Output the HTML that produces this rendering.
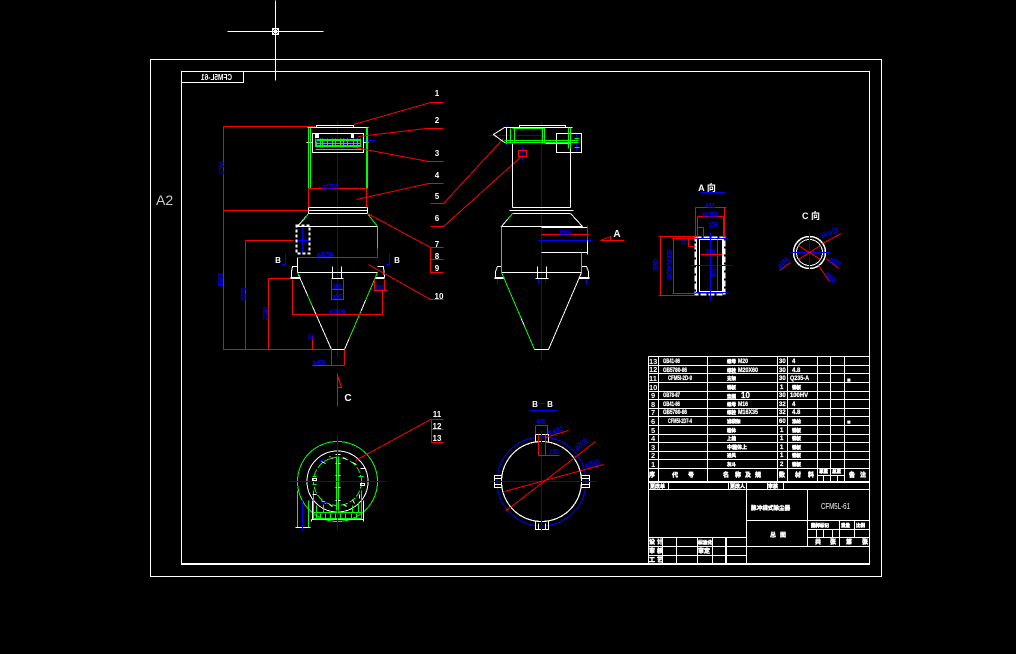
<!DOCTYPE html>
<html><head><meta charset="utf-8"><style>
html,body{margin:0;padding:0;background:#000;width:1016px;height:654px;overflow:hidden}
svg{display:block}
.l{fill:none;shape-rendering:crispEdges;stroke-width:1}
.w{stroke:#fff}.g{stroke:#0f0}.r{stroke:#f00}.b{stroke:#00f}
text{font-family:"Liberation Sans","Noto Sans CJK SC",sans-serif}
.tb{fill:#00f;stroke:#00f;stroke-width:.35px;font-size:7.500px;text-anchor:middle}
.tw{fill:#fff;font-size:8px;font-weight:bold;text-anchor:middle}
.tc{fill:#fff;font-size:7.500px;font-weight:bold}
.tm{fill:#fff;stroke:#fff;stroke-width:.25px;font-size:6px;font-weight:bold}
.tn{fill:#fff;stroke:#fff;stroke-width:.5px;font-size:4.500px;font-weight:bold}
</style></head><body>
<svg width="1016" height="654" viewBox="0 0 1016 654" xmlns="http://www.w3.org/2000/svg">
<rect width="1016" height="654" fill="#000"/>
<g transform="translate(.5 .5)">
<!-- frames -->
<g class="l w">
<path d="M150 59H881V576H150Z"/>
<path d="M181 71H869V564H181Z"/>
<path d="M181 563H869"/>
<path d="M181 82H243V71"/>
<path d="M275 0V80M227 31H323"/>
<path d="M272 28H278V34H272Z"/>
<path d="M272 28L278 34M278 28L272 34"/>
</g>

<!-- front view: axis -->
<g class="l b">
<path d="M337 121V357"/>
<path d="M302 226V253M296 240H309"/>
<path d="M285 253V264H281M389 253V264H385"/>
<path d="M315 140H375"/>
<path d="M318 138V147M324 138V147M330 138V147M344 138V147M350 138V147M356 138V147"/>
</g>
<!-- front view: white -->
<g class="l w">
<path d="M307 127H368M316 127V125H353V127"/>
<path d="M312 152V133H363V152ZM306 142H312M363 142H368"/>
<path d="M308 207H367M308 210H367M308 213H367M308 207V213M367 207V213"/>
<path d="M308 213L297 226M297 226H377"/>
<path d="M297 257V272H377M297 272L331 349H344"/>
<path d="M377 272L344 349" />
<path d="M297 266H292L291 271V277M377 266H383L384 277"/>
<path d="M290 277H300M375 277H384M290 278H300M375 278H384"/>
<path d="M332 266V278M341 266V278M331 278H343"/>
<path d="M296 225H309V253H296Z" stroke-dasharray="3 2" stroke-width="2"/>
<path d="M315 134H318V137H315ZM351 133H353V137H351Z" fill="#fff"/>
</g>
<!-- front view: green -->
<g class="l g">
<path d="M308 127V188M310 127V188M366 127V188M367 127V188"/>
<path d="M367 213L377 226V248M308 213L302 221"/>
<path d="M315 149H362M315 138V146H360V138"/>
<path d="M316 139H360M316 140H360M316 141V147M320 138V147M322 138V147M327 138V147M332 138V147M335 138V147M340 138V147M343 138V147M347 138V147M353 138V147M357 138V147"/>
<path d="M316 143H360M316 145H360"/>
<path d="M377 272L344 349" stroke-dasharray="30 12"/>
<path d="M297 272L331 349" stroke-dasharray="3 22 12 50"/>
</g>
<!-- front view: red -->
<g class="l r">
<path d="M223 126H315M223 126V349H331M223 210H308"/>
<path d="M245 240H293M245 240V349"/>
<path d="M268 278H290M268 278V349"/>
<path d="M292 279V314H382V290"/>
<path d="M308 188H366M308 188V207M366 188V207"/>
<path d="M297 257H377M377 248V257"/>
<path d="M331 349V365M344 349V365M312 365H344"/>
<path d="M312 335V349"/>
<path d="M337 373V406M337 375L341 387H337"/>
<path d="M331 279V299H343V279M331 289H343"/>
<path d="M374 279V290H387M384 279V290"/>
<path d="M353 124L430 102H443M358 136L426 128H443M354 147L428 161H443M356 199L428 183H443"/>
<path d="M430 203H443L503 138M430 226H443L522 155"/>
<path d="M367 213L430 247H443M430 247V272H443M430 259H443"/>
<path d="M368 264L430 299H443"/>
</g>
<!-- right view -->
<g class="l b">
<path d="M541 121V360"/>
<path d="M488 135H541"/>
<path d="M506 125V145"/>
<path d="M538 240H592"/>
<path d="M522 146V160"/>
<path d="M497 278V284M586 278V284M538 278V283M545 278V283"/>
<path d="M576 134V150"/>
</g>
<g class="l w">
<path d="M504 127H572M519 127V125H565V127"/>
<path d="M504 127L493 134L504 142H512M506 127V143"/>
<path d="M512 143V207M570 143V207M545 143H570"/>
<path d="M556 133H581V152H556Z"/>
<path d="M509 210H573M512 207H570M512 213H570"/>
<path d="M512 213L501 226H582M570 213L582 226"/>
<path d="M541 227H587V254M541 252H587"/>
<path d="M501 272H581M501 272L534 349H548L581 272"/>
<path d="M501 266H497L495 271V277M581 266H586L588 271V277"/>
<path d="M494 277H504M579 277H589M494 278H504M579 278H589"/>
<path d="M537 266V278M546 266V278M535 278H548"/>
</g>
<g class="l g">
<path d="M501 226V272M581 252V272"/>
<path d="M512 128H544V143M514 128V143M510 128V143M542 128V143"/>
<path d="M504 140H578M504 142H578"/>
<path d="M568 127V148M570 127V148M574 147H579M574 138H579"/>
<path d="M501 272L534 349" stroke-dasharray="50 8"/>
<path d="M512 213L507 219"/>
</g>
<g class="l r">
<path d="M541 234H589M587 225V240"/>
<path d="M600 240H624M600 240L610 236V240"/>
<path d="M518 150H526V156H518Z"/>
</g>

<!-- A view -->
<g class="l w">
<path d="M695 237H724V294H695Z" stroke-width="2" stroke-dasharray="6 2"/>
<path d="M699 239H722V291H699Z"/>
<path d="M696 237V294M723 237V294"/>
</g>
<g class="l b">
<path d="M700 192H725"/>
<path d="M710 232V300M690 265H732"/>
<path d="M695 238H727M695 292H727"/>
</g>
<g class="l r">
<path d="M695 207H726M695 207V237M724 207V237"/>
<path d="M697 216H723M697 216V237M723 216V237"/>
<path d="M697 227H703M703 227V237"/>
<path d="M658 236H696M658 295H695M660 236V295"/>
<path d="M672 238H696M672 293H696M673 238V293"/>
<path d="M688 237V246M688 246H695"/>
<path d="M700 254H722M717 239V290"/>
</g>

<!-- C view -->
<circle cx="809" cy="252" r="16" fill="none" stroke="#fff" stroke-width="1.500" shape-rendering="crispEdges"/>
<circle cx="809" cy="252" r="13" fill="none" stroke="#fff" stroke-width="1" shape-rendering="crispEdges"/>
<g class="l b">
<path d="M801 219H820M809 231V270M790 252H830"/>
<path d="M809 236V268" />
</g>
<g class="l r">
<path d="M798 245L820 259M798 259L820 245"/>
<path d="M822 243L841 233M790 262L779 270M826 258L838 268M818 265L829 281"/>
</g>

<!-- plan view -->
<circle cx="337" cy="481" r="40" fill="none" stroke="#0f0" stroke-width="1" shape-rendering="crispEdges"/>
<circle cx="337" cy="481" r="30.500" fill="#000" stroke="#fff" stroke-width="1" shape-rendering="crispEdges"/>
<circle cx="337" cy="481" r="24" fill="none" stroke="#0f0" stroke-width="1" stroke-dasharray="7 2" shape-rendering="crispEdges"/>
<g class="l g">
<path d="M336 456V510M338 456V510"/>
<path d="M313 512H361V518H313ZM313 490V512M361 490V512"/>
<path d="M316 513V518M320 513V518M325 513V518M330 513V518M335 513V518M340 513V518M345 513V518M351 513V518M356 513V518"/>
<path d="M316 505V512M323 504V512M352 505V512M358 502V512"/>
<path d="M297 490V527M308 500V527"/>
<path d="M312 476H316M312 484H316M358 476H363"/>
</g>
<g class="l w">
<path d="M311 519H363M312 500V519M363 500V519M311 519V521M363 519V521"/>
<path d="M295 527H310"/>
<path d="M335 454H340M335 463H340M335 475H340M335 487H340M335 500H340"/>
<path d="M312 478H316V480H312ZM312 494H316M360 468H364M360 483H364V485H360ZM359 494V498"/>
<path d="M321 461L325 463M329 456L332 458M343 457L346 459M352 462L356 464M321 500L325 503M329 504L332 506M343 504L346 506M352 499L354 503"/>
</g>
<g class="l b">
<path d="M337 435V530M289 481H386M302 500V530"/>
<path d="M319 460H323M328 457H331M344 457H347M315 469V470M310 481H313M322 502H326"/>
</g>
<g class="l r">
<path d="M355 460L430 419H443M431 419V442H443M431 429H443"/>
</g>

<!-- B-B view -->
<circle cx="541" cy="481" r="44.500" fill="none" stroke="#00f" stroke-width="1" shape-rendering="crispEdges"/>
<circle cx="541" cy="481" r="40" fill="none" stroke="#fff" stroke-width="1.200" shape-rendering="crispEdges"/>
<g class="l w">
<path d="M535 442V434H548V442M538 434V440M545 434V440"/>
<path d="M535 521V529H548V521M538 523V529M545 523V529"/>
<path d="M501 475H494V487H501M494 478H501M494 484H501"/>
<path d="M581 475H589V487H581M581 478H589M581 484H589"/>
</g>
<g class="l b">
<path d="M529 410H557M538 403H545"/>
<path d="M541 430V532M489 481H596"/>
</g>
<g class="l r">
<path d="M535 425H547V434M535 425V434"/>
<path d="M538 434V455M545 434V455M538 455H559"/>
<path d="M545 437L568 430"/>
<path d="M506 510L595 441M506 508V510"/>
<path d="M504 491L603 464"/>
</g>

<!-- parts table -->
<g class="l w">
<path d="M648 356H869V564"/>
<path d="M648 356V564"/>
<path d="M648 365H869M648 373H869M648 382H869M648 391H869M648 399H869M648 408H869M648 416H869M648 425H869M648 434H869M648 442H869M648 451H869M648 459H869M648 468H869"/>
<path d="M658 356V481M707 356V481M777 356V481M787 356V481M817 356V481M830 356V481M844 356V481"/>
<path d="M817 475H844M823 475V481M837 475V481"/>
<path d="M648 481H869M648 482H869M648 489H869"/>
<path d="M668 482V489M728 482V489M746 482V563M767 482V489M783 482V489"/>
<path d="M807 489V546M746 520H869M807 529H869M807 537H869M746 546H869"/>
<path d="M839 520V546M854 520V537M816 529V537M823 529V537M832 529V537"/>
<path d="M648 537H746M648 546H746M648 555H746"/>
<path d="M662 537V563M676 537V563M697 537V563M712 537V563M725 537V563M726 537V563"/>
</g>
</g>

<!-- labels -->
<text x="156" y="205" font-size="14" fill="#ccc">A2</text>
<text transform="translate(232 80) scale(-1 1)" font-size="8" font-weight="bold" fill="#fff" textLength="31" lengthAdjust="spacingAndGlyphs">CFM5L-61</text>

<g class="tw">
<text x="437" y="96">1</text><text x="437" y="123">2</text><text x="437" y="156">3</text>
<text x="437" y="178">4</text><text x="437" y="199">5</text><text x="437" y="221">6</text>
<text x="437" y="247">7</text><text x="437" y="259">8</text><text x="437" y="271">9</text>
<text x="439" y="299">10</text>
<text x="437" y="417">11</text><text x="437" y="429">12</text><text x="437" y="441">13</text>
<text x="278" y="263">B</text><text x="397" y="263">B</text>
<text x="348" y="401" font-size="10">C</text>
<text x="617" y="237" font-size="10">A</text>
<text x="707" y="191" font-size="9">A 向</text>
<text x="811" y="219" font-size="9">C 向</text>
<text x="535" y="407">B</text><text x="550" y="407">B</text>
</g>

<g class="tb">
<text x="330" y="189" textLength="15" lengthAdjust="spacingAndGlyphs">φ1650</text>
<text x="325" y="257" textLength="16" lengthAdjust="spacingAndGlyphs">φ3250</text>
<text x="337" y="289" textLength="9" lengthAdjust="spacingAndGlyphs">180</text>
<text x="337" y="299" textLength="9" lengthAdjust="spacingAndGlyphs">φ30</text>
<text x="379" y="290" textLength="9" lengthAdjust="spacingAndGlyphs">300</text>
<text x="337" y="314" textLength="16" lengthAdjust="spacingAndGlyphs">φ2800</text>
<text x="319" y="365" textLength="12" lengthAdjust="spacingAndGlyphs">φ400</text>
<text transform="translate(224 168) rotate(-90)" textLength="13" lengthAdjust="spacingAndGlyphs">2780</text>
<text transform="translate(223 280) rotate(-90)" textLength="14" lengthAdjust="spacingAndGlyphs">4536</text>
<text transform="translate(246 294) rotate(-90)" textLength="13" lengthAdjust="spacingAndGlyphs">3270</text>
<text transform="translate(268 313) rotate(-90)" textLength="13" lengthAdjust="spacingAndGlyphs">2231</text>
<text transform="translate(313 337) rotate(-90)" textLength="5" lengthAdjust="spacingAndGlyphs">110</text>
<text x="565" y="235" textLength="12" lengthAdjust="spacingAndGlyphs">1500</text>
<text x="710" y="208" textLength="10" lengthAdjust="spacingAndGlyphs">431</text>
<text x="710" y="217" textLength="16" lengthAdjust="spacingAndGlyphs">4X109</text>
<text x="713" y="227" textLength="9" lengthAdjust="spacingAndGlyphs">109</text>
<text x="710" y="254" textLength="10" lengthAdjust="spacingAndGlyphs">280</text>
<text transform="translate(716 272) rotate(-90)" textLength="11" lengthAdjust="spacingAndGlyphs">300</text>
<text transform="translate(658 265) rotate(-90)" textLength="12" lengthAdjust="spacingAndGlyphs">330</text>
<text transform="translate(672 265) rotate(-90)" textLength="30" lengthAdjust="spacingAndGlyphs">1008=3X336</text>
<text transform="translate(686 241) rotate(-90)" textLength="8" lengthAdjust="spacingAndGlyphs">100</text>
<text transform="translate(830 235) rotate(-20)" textLength="18" lengthAdjust="spacingAndGlyphs">16-φ18</text>
<text transform="translate(785 265) rotate(-40)" textLength="12" lengthAdjust="spacingAndGlyphs">φ470</text>
<text transform="translate(834 264) rotate(25)" textLength="12" lengthAdjust="spacingAndGlyphs">φ520</text>
<text transform="translate(829 279) rotate(50)" textLength="12" lengthAdjust="spacingAndGlyphs">φ538</text>
<text x="541" y="424" textLength="9" lengthAdjust="spacingAndGlyphs">400</text>
<text x="554" y="454" textLength="9" lengthAdjust="spacingAndGlyphs">130</text>
<text transform="translate(556 433) rotate(-15)" textLength="15" lengthAdjust="spacingAndGlyphs">6-φ32</text>
<text transform="translate(583 446) rotate(-35)" textLength="15" lengthAdjust="spacingAndGlyphs">φ2530</text>
<text transform="translate(593 466) rotate(-15)" textLength="15" lengthAdjust="spacingAndGlyphs">φ2640</text>
</g>

<!-- table text -->
<g class="tc">
<text x="649" y="364">13</text><text x="649" y="372">12</text><text x="649" y="381">11</text><text x="649" y="390">10</text>
<text x="651" y="398">9</text><text x="651" y="407">8</text><text x="651" y="415">7</text><text x="651" y="424">6</text>
<text x="651" y="433">5</text><text x="651" y="441">4</text><text x="651" y="450">3</text><text x="651" y="458">2</text><text x="651" y="467">1</text>
</g>
<g class="tm">
<text x="663" y="363" textLength="17" lengthAdjust="spacingAndGlyphs">GB41-86</text>
<text x="663" y="372" textLength="24" lengthAdjust="spacingAndGlyphs">GB5780-86</text>
<text x="668" y="380" textLength="24" lengthAdjust="spacingAndGlyphs">CFM5I-2D-9</text>
<text x="663" y="397" textLength="17" lengthAdjust="spacingAndGlyphs">GB78-87</text>
<text x="663" y="406" textLength="17" lengthAdjust="spacingAndGlyphs">GB41-86</text>
<text x="663" y="414" textLength="24" lengthAdjust="spacingAndGlyphs">GB5780-86</text>
<text x="668" y="423" textLength="24" lengthAdjust="spacingAndGlyphs">CFM5I-2D7-4</text>

<text x="738" y="363" textLength="10" lengthAdjust="spacingAndGlyphs">M20</text>
<text x="738" y="372" textLength="20" lengthAdjust="spacingAndGlyphs">M20X60</text>
<text x="741" y="398" font-size="8">10</text>
<text x="738" y="406" textLength="10" lengthAdjust="spacingAndGlyphs">M16</text>
<text x="738" y="414" textLength="20" lengthAdjust="spacingAndGlyphs">M16X35</text>

<text x="779" y="363">30</text><text x="779" y="372">30</text><text x="779" y="380">30</text><text x="780" y="389">1</text>
<text x="779" y="397">30</text><text x="779" y="406">32</text><text x="779" y="414">32</text><text x="779" y="423">60</text>
<text x="780" y="432">1</text><text x="780" y="440">1</text><text x="780" y="449">1</text><text x="780" y="457">1</text><text x="780" y="466">2</text>

<text x="792" y="363">4</text><text x="792" y="372">4.8</text>
<text x="790" y="380" textLength="19" lengthAdjust="spacingAndGlyphs">Q235-A</text>
<text x="790" y="397" textLength="18" lengthAdjust="spacingAndGlyphs">100HV</text>
<text x="792" y="406">4</text><text x="792" y="414">4.8</text>
<text x="847" y="382">■</text><text x="847" y="424">■</text>
</g>
<g class="tn">
<text x="727" y="363">螺母</text><text x="727" y="372">螺栓</text><text x="727" y="380">支架</text>
<text x="727" y="389">钢板</text><text x="727" y="398">垫圈</text><text x="727" y="406">螺母</text>
<text x="727" y="414">螺栓</text><text x="727" y="423">滤袋架</text><text x="727" y="432">箱体</text>
<text x="727" y="440">上箱</text><text x="727" y="449" font-size="5">中箱体上</text><text x="727" y="457">进风</text><text x="727" y="466">灰斗</text>
<text x="792" y="389">钢板</text><text x="792" y="423">涤纶</text><text x="792" y="432">钢板</text><text x="792" y="440">钢板</text>
<text x="792" y="449">钢板</text><text x="792" y="457">钢板</text><text x="792" y="466">钢板</text>
<text x="649" y="477" font-size="6">序</text>
<text x="672" y="477" font-size="6">代</text><text x="688" y="477" font-size="6">号</text>
<text x="723" y="477" font-size="6">名</text><text x="735" y="477" font-size="6">称</text><text x="745" y="477" font-size="6">及</text><text x="755" y="477" font-size="6">规</text>
<text x="779" y="477" font-size="6">数</text><text x="795" y="477" font-size="6">材</text><text x="808" y="477" font-size="6">料</text>
<text x="819" y="473">单重</text><text x="832" y="473">总重</text><text x="849" y="477" font-size="6">备</text><text x="860" y="477" font-size="6">注</text>
<text x="650" y="488" font-size="5">更改单</text><text x="730" y="488" font-size="5">更改人</text><text x="768" y="488" font-size="5">审核</text>
<text x="649" y="544" font-size="6">设</text><text x="657" y="544" font-size="6">计</text>
<text x="649" y="553" font-size="6">审</text><text x="657" y="553" font-size="6">核</text>
<text x="649" y="562" font-size="6">工</text><text x="657" y="562" font-size="6">艺</text>
<text x="698" y="544" font-size="4.800">标准化</text><text x="698" y="553" font-size="6">审</text><text x="704" y="553" font-size="6">定</text>
<text x="811" y="527">图样</text><text x="820" y="527">标记</text><text x="841" y="527">重量</text><text x="856" y="527">比例</text>
<text x="815" y="544" font-size="6">共</text><text x="830" y="544" font-size="6">张</text><text x="846" y="544" font-size="6">第</text><text x="862" y="544" font-size="6">张</text>
</g>
<text x="751" y="510" font-size="5.600" font-weight="bold" fill="#fff" stroke="#fff" stroke-width=".4">脉冲袋式除尘器</text>
<text x="770" y="537" font-size="6" font-weight="bold" fill="#fff" stroke="#fff" stroke-width=".3">总</text>
<text x="780" y="537" font-size="6" font-weight="bold" fill="#fff" stroke="#fff" stroke-width=".3">图</text>
<text x="821" y="509" font-size="8" fill="#fff" textLength="29" lengthAdjust="spacingAndGlyphs">CFM5L-61</text>
</svg>
</body></html>
